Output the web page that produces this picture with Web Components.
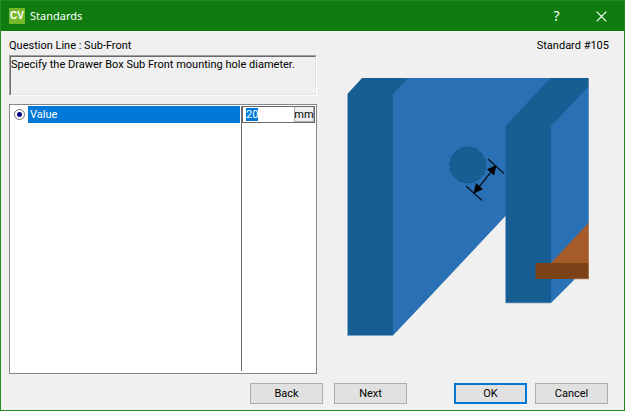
<!DOCTYPE html>
<html lang="en">
<head>
<meta charset="utf-8">
<title>Standards</title>
<style>
html,body{margin:0;height:100%}
body{font:11px/14px Roboto,"DejaVu Sans",sans-serif;color:#000;background:#f0f0f0}
</style>
</head>
<body>
<standards-dialog></standards-dialog>
<script>
function define(name, html, setup) {
  const template = document.createElement('template');
  template.innerHTML = html;
  customElements.define(name, class extends HTMLElement {
    constructor() {
      super();
      this.attachShadow({mode: 'open'}).append(template.content.cloneNode(true));
    }
    connectedCallback() { if (setup) setup(this, this.shadowRoot); }
  });
}

define('title-bar', `
<style>
:host{display:flex;align-items:center;height:30px;padding:0 0 0 8px;background:#107c10;color:#fff;font:11px/16px "Noto Sans",sans-serif}
.logo{width:16px;height:16px;margin-right:5px;flex:none;background:#76b82a;font:bold 10px/16px "Liberation Sans",sans-serif;text-align:center}
h1{flex:1;margin:0;font:inherit}
button{width:45px;height:30px;padding:0;border:0;background:none;color:inherit;font:14px/30px "Noto Sans",sans-serif;display:grid;place-items:center}
</style>
<span class="logo">CV</span>
<h1><slot></slot></h1>
<button aria-label="Help">?</button>
<button aria-label="Close"><svg width="11" height="11" viewBox="0 0 11 11"><path d="M.7.7l9.600 9.600M10.300.7L.7 10.300" stroke="#fff" stroke-width="1.200"/></svg></button>
`);

define('push-button', `
<style>
:host{display:block;width:73px}
button{box-sizing:border-box;display:block;width:100%;height:21px;padding:1px 0 0;border:1px solid #adadad;background:#e1e1e1;color:#000;font:inherit}
:host([default]) button{border:2px solid #0078d7}
</style>
<button type="button"><slot></slot></button>
`);

define('description-box', `
<style>
:host{box-sizing:border-box;display:block;min-height:41px;border:1px solid;border-color:#a0a0a0 #fff #fff #a0a0a0}
p{box-sizing:border-box;min-height:39px;margin:0;padding:1px 0;border:1px solid;border-color:#696969 #e3e3e3 #e3e3e3 #696969}
</style>
<p><slot></slot></p>
`);

define('value-list', `
<style>
:host{box-sizing:border-box;display:grid;grid-template-columns:minmax(0,1fr) 75px;border:1px solid #828790;background:#fff}
.choice{display:flex;align-items:flex-start;padding-top:1px}
input[type=radio]{appearance:none;box-sizing:border-box;flex:none;width:11px;height:11px;margin:3px 3px 0 4px;border:1px solid #707070;border-radius:50%;background:radial-gradient(circle,#000080 0 2px,#fff 3px)}
input[type=radio]:focus{outline:none}
label{flex:1;padding:2px 2px 1px;margin-right:1px;background:#0078d7;color:#fff}
.values{margin:1px 0 2px;border-left:1px solid #696969}
.editor{box-sizing:border-box;display:flex;height:17px;border:1px solid #696969;margin-right:1px}
input[type=text]{box-sizing:border-box;flex:1;min-width:0;height:15px;padding:0 0 0 3px;border:0;outline:0;font:inherit;background:#fff;caret-color:transparent}
::selection{background:#0078d7;color:#fff}
.editor button{box-sizing:border-box;width:20px;padding:1px 0 0;border:1px solid #adadad;border-width:0 1px 1px 1px;background:#f0f0f0;color:#000;font:inherit;display:flex;justify-content:center}
</style>
<div class="choice"><input type="radio" id="choice" checked><label for="choice"><slot></slot></label></div>
<div class="values"><div class="editor"><input type="text" value="20" aria-label="Value in millimetres"><button type="button">mm</button></div></div>
`, (host, root) => {
  const field = root.querySelector('input[type=text]');
  field.focus();
  field.select();
});

define('mounting-diagram', `
<style>
:host{display:block}
svg{display:block;width:100%;height:auto}
</style>
<svg viewBox="347 78 242 258" role="img" aria-label="Sub front mounting hole diameter">
<path fill="#2a70b4" d="M362 78H589V130L393 335.500H348V93.500Z"/>
<path fill="#175e93" d="M347.500 94L362.500 78H408L393 94V335.500H347.500Z"/>
<path fill="#2a70b4" d="M551 126L589 86V265L551 303Z"/>
<path fill="#f0f0f0" d="M393.500 335.500L505.500 216V336Z"/>
<path fill="#175e93" d="M505.500 126L550.500 78H589V86L551 126V303H505.500Z"/>
<path fill="#a65c2a" d="M551 263L589 222.500V263Z"/>
<path fill="#7b4218" d="M535.500 263H589V279H535.500Z"/>
<path fill="none" stroke="#8db2d1" stroke-width=".7" d="M347.500 94V335.500H393M505.500 216V303H551M588.700 78V222"/>
<path fill="none" stroke="#c69a7d" stroke-width=".7" d="M588.700 222V279H573"/>
<circle cx="467.800" cy="165" r="18" fill="#175e93" stroke="#104d7c" stroke-width=".8" stroke-dasharray="4 3"/>
<path fill="none" stroke="#081420" stroke-width="1.300" d="M488 159l16 14.500M466 186l16 14.500M474 193L496 166"/>
<path fill="#000" d="M496.500 165l-2.500 10.500-7-6.200zM473.500 193.500l2.500-10.500 7 6.200z"/>
</svg>
`);

define('standards-dialog', `
<style>
:host{box-sizing:border-box;display:flex;flex-direction:column;min-height:100vh;border:1px solid #228b22;background:#f0f0f0}
main{flex:1;display:grid;grid-template-columns:minmax(0,308fr) minmax(0,292fr);padding:8px 15px 0 8px}
.left{display:flex;flex-direction:column}
h2,.standard{margin:0;font:inherit}
description-box{margin:2px 0 8px}
value-list{flex:1}
.standard{text-align:right}
mounting-diagram{margin:25px 20px 0 30px}
footer{display:flex;justify-content:flex-end;gap:8px;padding:9px 16px 6px}
push-button:nth-child(2){margin:0 39px 0 3px}
</style>
<title-bar>Standards</title-bar>
<main>
<section class="left">
<h2>Question Line : Sub-Front</h2>
<description-box>Specify the Drawer Box Sub Front mounting hole diameter.</description-box>
<value-list>Value</value-list>
</section>
<section>
<p class="standard">Standard #105</p>
<mounting-diagram></mounting-diagram>
</section>
</main>
<footer>
<push-button>Back</push-button>
<push-button>Next</push-button>
<push-button default>OK</push-button>
<push-button>Cancel</push-button>
</footer>
`);
</script>
</body>
</html>
